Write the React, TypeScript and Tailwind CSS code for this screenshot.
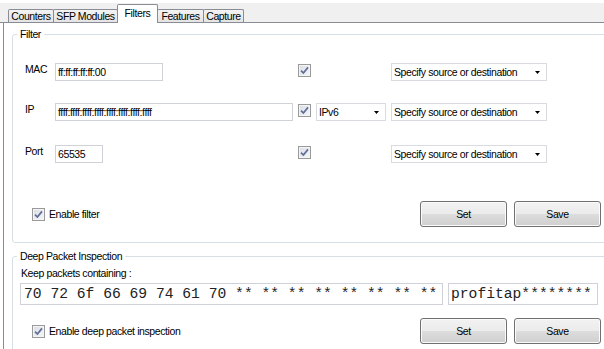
const tabs = [
    { label: 'Counters', width: 'w-[46px]' },
    { label: 'SFP Modules', width: 'w-[65px]' },
    { label: 'Filters', width: 'w-[41px]', active: true },
    { label: 'Features', width: 'w-[47px]' },
    { label: 'Capture', width: 'w-[41px]' },
]

function CheckBox() {
    return (
        <span className="w-[13px] h-[13px] shrink-0 border border-[#9a9a9a] bg-[linear-gradient(135deg,#d9dde4,#f6f7f9)] shadow-[inset_0_0_0_1px_#f4f4f4] flex items-center justify-center">
            <svg width="9" height="9" viewBox="0 0 9 9">
                <path d="M1 4.6 L3.4 7 L8 1.4" stroke="#5f6f99" strokeWidth="1.7" fill="none" />
            </svg>
        </span>
    )
}

type SelectProps = {
    value: string
    width: string
}

function Select({ value, width }: SelectProps) {
    return (
        <div className={`${width} h-[18px] border border-[#d9dbe0] bg-white flex items-center justify-between pl-[2px] pr-[6px]`}>
            <span>{value}</span>
            <svg width="5" height="3" viewBox="0 0 5 3">
                <path d="M0 0 H5 L2.5 3 Z" fill="#000" />
            </svg>
        </div>
    )
}

type InputProps = {
    value: string
    width: string
}

function TextInput({ value, width }: InputProps) {
    return (
        <div className={`${width} h-[18px] border border-[#cfd2d8] bg-white flex items-center pl-[2px] overflow-hidden whitespace-nowrap`}>
            {value}
        </div>
    )
}

function Button({ label }: { label: string }) {
    return (
        <button className="w-[87px] h-[26px] rounded-[3px] border border-[#707070] shadow-[inset_0_0_0_1px_#fbfbfb] bg-[linear-gradient(#f2f2f2,#ebebeb_50%,#dddddd_50%,#cfcfcf)] text-black">
            {label}
        </button>
    )
}

const rows = [
    { label: 'MAC', value: 'ff:ff:ff:ff:ff:00', width: 'w-[108px]', mt: 'mt-[22px]' },
    { label: 'IP', value: 'ffff:ffff:ffff:ffff:ffff:ffff:ffff:ffff', width: 'w-[238px]', mt: 'mt-[22px]', ipv6: true },
    { label: 'Port', value: '65535', width: 'w-[48px]', mt: 'mt-[24px]' },
]

export default function App() {
    return (
        <div className="w-[604px] h-[349px] overflow-hidden bg-white text-black font-['Liberation_Sans',Arial,sans-serif] text-[10.5px] leading-[13px] tracking-[-0.4px]">
            <div className="mt-[3px] h-[20px] bg-[#f0f0f0] border-b border-[#898c95] flex items-end pl-[8px]">
                {tabs.map((tab, i) => (
                    <div
                        key={tab.label}
                        className={
                            (i > 0 ? '-ml-px ' : '') +
                            tab.width +
                            (tab.active
                                ? ' h-[19px] -mb-px relative z-10 bg-white border border-b-0 border-[#898c95] rounded-t-[2px] flex justify-center pt-[2px]'
                                : ' h-[13px] bg-[linear-gradient(#f3f3f3,#e4e4e4)] border border-b-0 border-[#898c95] rounded-t-[2px] flex items-center justify-center')
                        }
                    >
                        {tab.label}
                    </div>
                ))}
            </div>

            <div className="ml-[3px] h-[330px] border-l border-[#898c95] pl-[8px] pt-[5px]">
                <fieldset className="w-[600px] border border-[#d5dfe5] rounded-[3px] pb-[15px]">
                    <legend className="ml-[4px] px-[3px] leading-[13px]">Filter</legend>

                    <div className="pl-[12px]">
                        {rows.map((row) => (
                            <div key={row.label} className={`${row.mt} grid grid-cols-[30px_243px_18px_75px_156px] h-[18px]`}>
                                <span>{row.label}</span>
                                <TextInput value={row.value} width={row.width} />
                                <div className="pt-[1px]"><CheckBox /></div>
                                <div>{row.ipv6 && <Select value="IPv6" width="w-[70px]" />}</div>
                                <Select value="Specify source or destination" width="w-[156px]" />
                            </div>
                        ))}
                    </div>

                    <div className="mt-[38px] w-[588px] pl-[19px] flex items-center justify-between">
                        <label className="flex items-center gap-[4px]">
                            <CheckBox />
                            <span>Enable filter</span>
                        </label>
                        <div className="flex gap-[7px]">
                            <Button label="Set" />
                            <Button label="Save" />
                        </div>
                    </div>
                </fieldset>

                <fieldset className="mt-[7px] w-[600px] h-[120px] border border-[#d5dfe5] rounded-[3px]">
                    <legend className="ml-[4px] px-[3px] leading-[13px]">Deep Packet Inspection</legend>

                    <div className="mt-[4px] pl-[8px]">Keep packets containing :</div>

                    <div className="mt-[3px] pl-[7px] flex gap-[5px] font-['Liberation_Mono','Courier_New',monospace] text-[14.67px] tracking-normal text-[#222]">
                        <div className="w-[423px] h-[22px] border border-[#cfd2d8] bg-white flex items-center pl-[3px] whitespace-pre">
                            70 72 6f 66 69 74 61 70 ** ** ** ** ** ** ** **
                        </div>
                        <div className="w-[150px] h-[22px] border border-[#cfd2d8] bg-white flex items-center pl-[2px] whitespace-pre">
                            profitap********
                        </div>
                    </div>

                    <div className="mt-[13px] w-[588px] pl-[19px] flex items-center justify-between">
                        <label className="flex items-center gap-[4px]">
                            <CheckBox />
                            <span>Enable deep packet inspection</span>
                        </label>
                        <div className="flex gap-[7px]">
                            <Button label="Set" />
                            <Button label="Save" />
                        </div>
                    </div>
                </fieldset>
            </div>
        </div>
    )
}
